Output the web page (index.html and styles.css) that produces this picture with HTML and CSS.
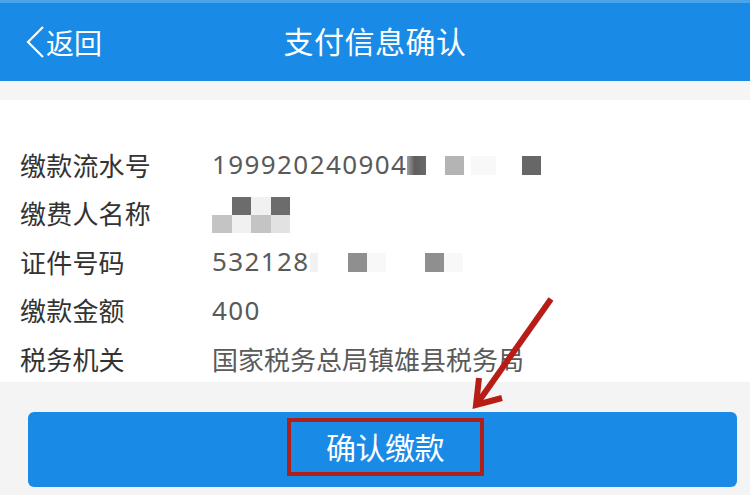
FILE: index.html
```html
<!DOCTYPE html>
<html lang="zh-CN">
<head>
    <meta charset="UTF-8">
    <meta name="viewport" content="width=device-width, initial-scale=1.0">
    <title>支付信息确认</title>
    <link rel="stylesheet" href="styles.css">
</head>
<body>
    <div class="page">
        <div class="header">
            <div class="back">
                <svg class="back-icon" width="20" height="34" viewBox="0 0 20 34">
                    <path d="M18 2 L3 17 L18 32" fill="none" stroke="#fff" stroke-width="2.2" stroke-linejoin="miter"/>
                </svg>
                <span>返回</span>
            </div>
            <div class="title">支付信息确认</div>
        </div>
        <div class="gap"></div>
        <div class="info">
            <div class="row">
                <div class="label">缴款流水号</div>
                <div class="value">
                    <span class="num">199920240904</span>
                    <span class="px px-fade"></span>
                    <span class="px px-light sp19"></span>
                    <span class="px px-wide px-faint sp7"></span>
                    <span class="px px-dark sp26"></span>
                </div>
            </div>
            <div class="row">
                <div class="label">缴费人名称</div>
                <div class="value">
                    <div class="mosaic">
                        <span></span><span class="m-dark"></span><span class="m-pale"></span><span class="m-dark"></span>
                        <span class="m-gray"></span><span class="m-pale"></span><span class="m-gray"></span><span class="m-soft"></span>
                    </div>
                </div>
            </div>
            <div class="row">
                <div class="label">证件号码</div>
                <div class="value">
                    <span class="num">532128</span>
                    <span class="px px-thin px-faint"></span>
                    <span class="px px-mid sp30"></span>
                    <span class="px px-faint"></span>
                    <span class="px px-mid sp39"></span>
                    <span class="px px-faint"></span>
                </div>
            </div>
            <div class="row">
                <div class="label">缴款金额</div>
                <div class="value"><span class="num">400</span></div>
            </div>
            <div class="row">
                <div class="label">税务机关</div>
                <div class="value">国家税务总局镇雄县税务局</div>
            </div>
        </div>
        <div class="footer">
            <div class="btn">
                <span class="btn-text">确认缴款</span>
            </div>
        </div>
        <!-- annotation arrow -->
        <svg class="arrow" width="750" height="495" viewBox="0 0 750 495">
            <g stroke="#b71c16" stroke-width="6" fill="none" stroke-linecap="butt">
                <line x1="551" y1="299" x2="479" y2="401"/>
                <polyline points="479,378 476,405 502,398"/>
            </g>
        </svg>
    </div>
</body>
</html>
```

FILE: styles.css
```css
* {
    margin: 0;
    padding: 0;
    box-sizing: border-box;
}
body {
    font-family: "Noto Sans CJK SC", "Noto Sans", sans-serif;
    background: #f4f4f4;
}
.page {
    width: 750px;
    height: 495px;
    overflow: hidden;
    position: relative;
}
.header {
    height: 81px;
    border-top: 3px solid #4ba4ea;
    background: #198be6;
    color: #fff;
    position: relative;
    display: flex;
    align-items: center;
    justify-content: center;
}
.back {
    position: absolute;
    left: 25px;
    top: 22px;
    display: flex;
    align-items: center;
    font-size: 28px;
    line-height: 34px;
}
.back-icon {
    margin-right: 1px;
}
.title {
    font-size: 30px;
    letter-spacing: 0.5px;
    margin-top: -4px;
}
.gap {
    height: 19px;
    background: #f5f5f5;
}
.info {
    height: 282px;
    background: #fff;
    padding-top: 40px;
    overflow: hidden;
}
.row {
    height: 48.5px;
    display: flex;
    align-items: center;
    font-size: 26px;
}
.label {
    width: 212px;
    padding-left: 20px;
    color: #333;
    letter-spacing: 0.2px;
}
.value {
    color: #5a5a5a;
    display: flex;
    align-items: center;
}
.num {
    letter-spacing: 1.4px;
    font-family: "Noto Sans", sans-serif;
}
.px {
    display: block;
    width: 19px;
    height: 19px;
    margin-top: 2px;
}
.px-fade {
    background: linear-gradient(to right, #a0a0a0, #5e5e5e 40%, #6a6a6a);
}
.px-light {
    background: #b4b4b4;
}
.px-wide {
    width: 25px;
}
.px-faint {
    background: #f8f8f8;
}
.px-dark {
    background: #676767;
}
.px-mid {
    background: #8f8f8f;
}
.px-thin {
    width: 8px;
    background: #f2f2f2;
}
.sp19 { margin-left: 19px; }
.sp7 { margin-left: 7px; }
.sp26 { margin-left: 26px; }
.sp30 { margin-left: 30px; }
.sp39 { margin-left: 39px; }
.mosaic {
    display: grid;
    grid-template-columns: repeat(4, 19.5px);
    grid-template-rows: 18px 18px;
    margin-top: 4px;
}
.mosaic span {
    background: #fff;
}
.mosaic .m-dark {
    background: #6c6c6c;
}
.mosaic .m-pale {
    background: #f1f1f1;
}
.mosaic .m-gray {
    background: #c4c4c4;
}
.mosaic .m-soft {
    background: #e2e2e2;
}
.footer {
    height: 113px;
    padding: 30px 13px 0 28px;
}
.btn {
    height: 75px;
    background: #198be6;
    border-radius: 6px;
    display: flex;
    align-items: center;
    justify-content: center;
}
.btn-text {
    width: 197px;
    height: 58px;
    margin-left: 5px;
    margin-top: -6px;
    border: 4px solid #b0201b;
    color: #fff;
    font-size: 30px;
    line-height: 48px;
    text-align: center;
    letter-spacing: -0.5px;
}
.arrow {
    position: absolute;
    left: 0;
    top: 0;
    pointer-events: none;
}
```
